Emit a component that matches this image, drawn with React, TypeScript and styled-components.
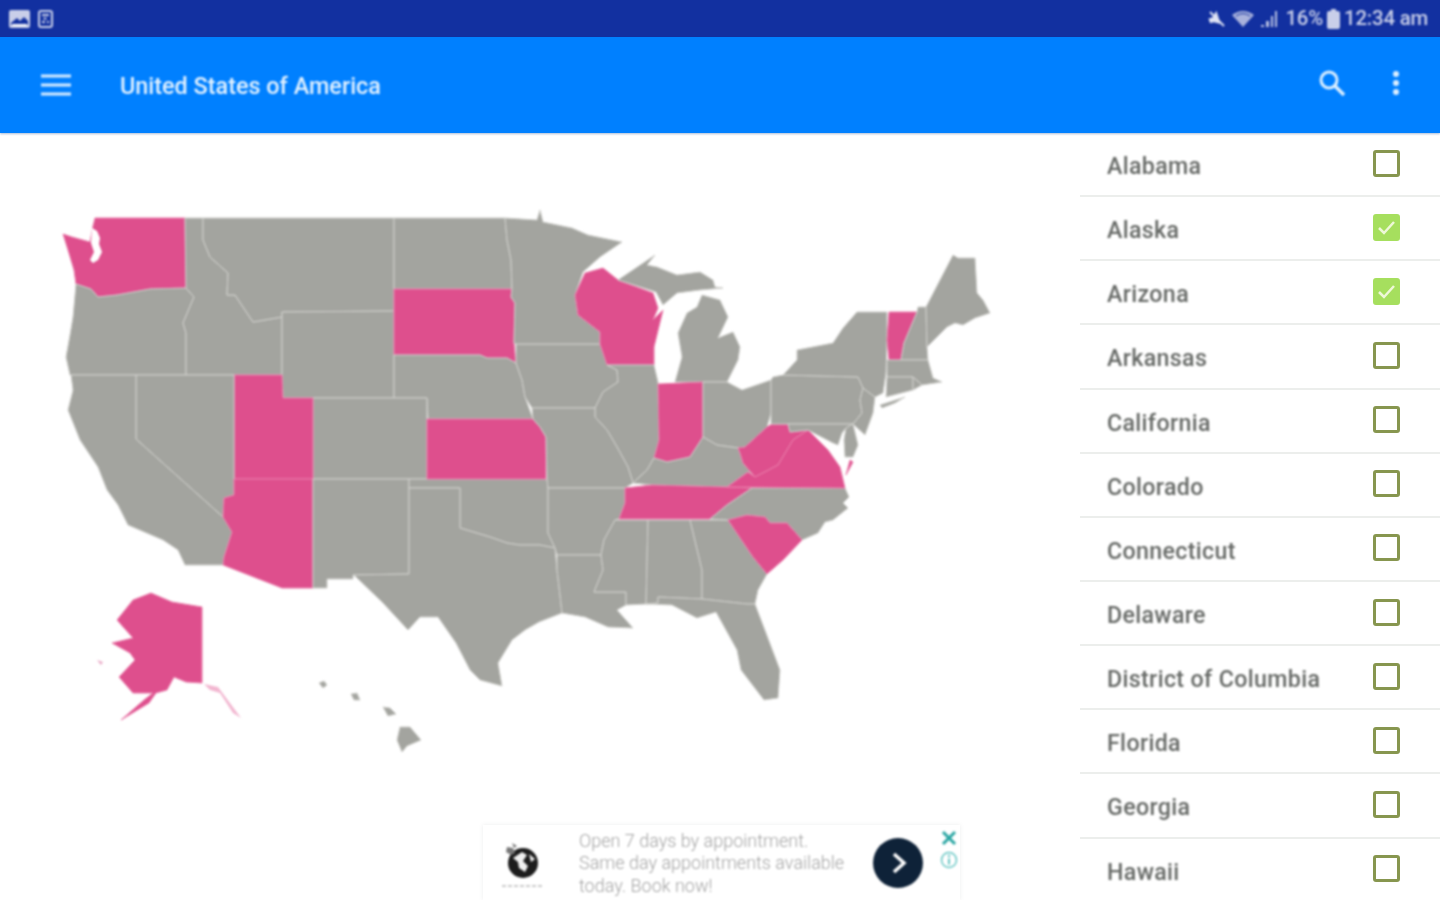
import React from "react";
import styled, { createGlobalStyle, css } from "styled-components";

const Global = createGlobalStyle`
  html, body { margin: 0; padding: 0; background: #fff; }
  body { font-family: Roboto, "Noto Sans", sans-serif; overflow: hidden; }
`;

const soft = css`
  filter: blur(0.9px);
`;

const Page = styled.div`
  width: 1440px;
  height: 900px;
  display: flex;
  flex-direction: column;
  overflow: hidden;
  position: relative;
`;

const StatusBar = styled.div`
  height: 37px;
  flex: none;
  background: #1230a0;
  display: flex;
  align-items: center;
  justify-content: space-between;
  padding: 0 12px 0 9px;
  color: #c9cfe9;
`;
const StatusGroup = styled.div`
  display: flex;
  align-items: center;
  ${soft}
`;
const LeftIcons = styled(StatusGroup)`
  gap: 8px;
`;
const RightIcons = styled(StatusGroup)`
  gap: 4px;
`;
const StatusText = styled.span`
  font-size: 20.4px;
  font-weight: 500;
  letter-spacing: -0.2px;
  line-height: 37px;
`;

const AppBar = styled.header`
  height: 96px;
  flex: none;
  background: #0080ff;
  display: flex;
  align-items: center;
  padding: 0 40px 0 41px;
  box-shadow: 0 1px 2px rgba(0, 60, 140, 0.35);
  position: relative;
  z-index: 2;
  color: #e4f2ff;
`;
const MenuIcon = styled.svg`
  flex: none;
  ${soft}
`;
const Title = styled.h1`
  margin: 2px 0 0 49px;
  font-size: 23.4px;
  font-weight: 500;
  flex: 1;
  ${soft}
`;
const ActionIcons = styled.div`
  display: flex;
  align-items: center;
  gap: 46px;
  margin-top: -5px;
  ${soft}
`;

const Content = styled.main`
  flex: 1;
  display: flex;
  min-height: 0;
  position: relative;
`;
const MapArea = styled.section`
  width: 1080px;
  flex: none;
  position: relative;
`;
const MapSvg = styled.svg`
  display: block;
  ${soft}
`;

const List = styled.ul`
  width: 360px;
  flex: none;
  margin: 0;
  padding: 0;
  list-style: none;
`;
const Row = styled.li`
  height: 64.15px;
  box-sizing: border-box;
  border-bottom: 2px solid #eceeec;
  display: flex;
  align-items: center;
  justify-content: space-between;
  padding: 0 40px 0 27px;
`;
const RowLabel = styled.span`
  font-size: 23.2px;
  font-weight: 500;
  letter-spacing: 0.35px;
  color: #666966;
  transform: translateY(2px);
  ${soft}
`;
const Check = styled.span<{ $on: boolean }>`
  width: 27px;
  height: 27px;
  box-sizing: border-box;
  border-radius: 3px;
  border: 3px solid ${(p) => (p.$on ? "#a6df5e" : "#87964f")};
  background: ${(p) => (p.$on ? "#a6df5e" : "#fff")};
  display: flex;
  align-items: center;
  justify-content: center;
  transform: translateY(-1px);
  filter: blur(0.6px);
`;

const Ad = styled.aside`
  position: absolute;
  left: 483px;
  bottom: 0;
  width: 477px;
  height: 75px;
  background: #fff;
  box-shadow: 0 0 4px rgba(120, 130, 130, 0.14);
  display: flex;
  align-items: center;
`;
const AdLogo = styled.div`
  width: 80px;
  margin-right: 16px;
  margin-top: 6px;
  flex: none;
  display: flex;
  justify-content: center;
  align-items: center;
  ${soft}
`;
const AdText = styled.p`
  margin: 2px 0 0;
  width: 294px;
  flex: none;
  font-size: 18px;
  line-height: 22.5px;
  font-weight: 300;
  color: #a3a3a3;
  white-space: nowrap;
  ${soft}
`;
const AdGo = styled.div`
  width: 50px;
  height: 50px;
  flex: none;
  border-radius: 50%;
  background: #0e2238;
  display: flex;
  align-items: center;
  justify-content: center;
  ${soft}
`;
const AdMarks = styled.div`
  margin-left: 17px;
  display: flex;
  flex-direction: column;
  align-items: center;
  gap: 5px;
  align-self: flex-start;
  padding-top: 5px;
  ${soft}
`;

type Region = { name: string; pts: string };

const selected = new Set([
  "Washington","South Dakota","Wisconsin","Vermont","Utah","Kansas","Indiana",
  "West Virginia","Virginia","Tennessee","South Carolina","Arizona","Alaska","VA Shore",
]);

const regions: Region[] = [
  { name: "Washington", pts: "95,218 185,218 186,288 150,289 117,295 98,297 91,289 76,284 74,270 68,250 63,234 72,237 90,242 93,226" },
  { name: "Oregon", pts: "76,284 91,289 98,297 117,295 150,289 186,288 194,297 183,323 186,333 186,375 70,375 66,357 70,335 73,317" },
  { name: "Idaho", pts: "185,218 203,218 203,240 210,257 228,273 227,295 235,295 253,322 282,317 282,375 186,375 186,333 183,323 194,297 186,288" },
  { name: "Montana", pts: "203,218 394,218 394,311 282,312 282,317 253,322 235,295 227,295 228,273 210,257 203,240" },
  { name: "Wyoming", pts: "282,312 394,311 394,398 283,398 282,375" },
  { name: "North Dakota", pts: "394,218 505,218 507,240 511,260 512,289 394,289" },
  { name: "South Dakota", pts: "394,289 512,289 511,297 515,303 514,343 516,363 507,358 487,358 480,355 394,355" },
  { name: "Nebraska", pts: "394,355 480,355 487,358 507,358 516,363 522,380 525,397 533,419 428,419 427,398 394,398" },
  { name: "Colorado", pts: "313,398 427,398 427,479 313,479" },
  { name: "Utah", pts: "234,375 282,375 283,398 313,398 313,479 234,479" },
  { name: "Nevada", pts: "136,375 234,375 234,495 224,498 223,517 136,439" },
  { name: "California", pts: "71,375 136,375 136,439 223,517 232,532 224,557 223,565 185,565 178,550 163,540 128,525 118,505 107,490 98,467 80,440 68,410 73,390" },
  { name: "Arizona", pts: "224,498 234,495 234,479 313,479 313,588 282,588 223,565 224,557 232,532 223,517" },
  { name: "New Mexico", pts: "313,479 409,479 409,574 353,575 353,579 327,579 327,588 313,588" },
  { name: "Oklahoma", pts: "409,479 547,479 548,488 548,533 555,548 540,545 520,545 507,543 490,537 460,528 460,488 409,488" },
  { name: "Texas", pts: "409,488 460,488 460,528 490,537 507,543 520,545 540,545 555,548 557,570 560,595 562,613 539,622 525,630 512,640 498,663 502,686 480,680 470,670 456,643 438,617 420,617 408,630 383,603 355,576 353,575 409,574" },
  { name: "Kansas", pts: "427,419 533,419 540,427 546,437 546,479 427,479" },
  { name: "Iowa", pts: "516,344 600,344 607,365 617,370 618,382 603,392 595,408 532,408 525,397 522,380 516,363" },
  { name: "Minnesota", pts: "505,218 537,220 540,210 543,222 572,228 588,235 622,242 600,257 583,272 575,295 578,315 600,332 600,344 516,344 514,343 515,303 511,297 512,289 511,260 507,240" },
  { name: "Wisconsin", pts: "585,273 603,268 618,280 653,293 658,308 653,320 663,310 654,347 654,365 607,365 600,344 600,332 578,315 575,295" },
  { name: "Upper Michigan", pts: "618,280 655,255 647,265 657,267 677,275 700,272 713,280 715,287 723,288 700,290 677,293 663,305 656,292" },
  { name: "Lower Michigan", pts: "702,295 720,300 728,317 718,338 733,332 740,347 738,360 727,382 675,382 682,357 678,333 687,313 697,307" },
  { name: "Illinois", pts: "607,365 654,365 658,382 659,440 654,458 647,470 633,483 628,467 617,447 607,430 595,417 595,408 603,392 618,382 617,370" },
  { name: "Indiana", pts: "658,384 703,382 703,437 690,457 667,462 654,458 659,440" },
  { name: "Ohio", pts: "703,382 727,382 742,390 771,380 771,413 767,427 745,447 738,448 717,445 703,437" },
  { name: "Missouri", pts: "532,408 595,408 595,417 607,430 617,447 628,467 633,483 625,488 548,488 547,479 546,437 540,427 533,419" },
  { name: "Arkansas", pts: "548,488 625,488 625,503 619,519 615,520 604,540 601,555 557,555 555,548 548,533" },
  { name: "Louisiana", pts: "557,555 601,555 603,570 594,592 626,592 626,605 617,610 633,628 608,627 585,617 562,613 560,595 557,570" },
  { name: "Mississippi", pts: "615,520 648,520 646,604 626,605 626,592 594,592 603,570 601,555 604,540" },
  { name: "Alabama", pts: "648,520 690,520 702,570 702,599 658,597 658,603 646,604" },
  { name: "Georgia", pts: "690,520 728,520 753,557 767,574 758,590 755,604 747,604 702,599 702,570" },
  { name: "Florida", pts: "646,604 658,603 658,597 702,599 747,604 755,604 766,633 780,670 778,698 764,700 741,670 737,650 716,612 697,618 672,605" },
  { name: "Kentucky", pts: "633,483 647,470 654,458 667,462 690,457 703,437 717,445 738,448 740,453 743,463 753,475 748,472 727,487 652,485" },
  { name: "Tennessee", pts: "625,488 652,485 727,487 752,488 727,505 710,519 619,519 625,503" },
  { name: "North Carolina", pts: "752,488 845,488 849,497 843,503 848,508 838,516 833,520 825,522 818,533 802,540 787,523 770,523 765,517 747,515 728,520 710,519 727,505" },
  { name: "South Carolina", pts: "728,520 747,515 765,517 770,523 787,523 802,540 783,560 767,574 753,557" },
  { name: "West Virginia", pts: "767,427 772,424 788,424 790,432 808,430 793,440 787,450 778,465 755,477 743,463 740,453 738,448 745,447" },
  { name: "Virginia", pts: "808,430 828,450 840,467 845,488 727,487 748,472 755,477 778,465 787,450 793,440" },
  { name: "VA Shore", pts: "850,460 853,462 846,475" },
  { name: "Pennsylvania", pts: "771,380 773,377 783,375 858,377 863,388 860,400 862,413 853,424 771,424 771,413" },
  { name: "Maryland", pts: "788,424 853,424 846,428 842,433 838,445 833,443 808,430 790,432" },
  { name: "Delaware", pts: "846,428 853,424 858,445 853,457 845,457 844,440" },
  { name: "New Jersey", pts: "863,388 875,397 873,413 865,435 853,424 862,413 860,400" },
  { name: "New York", pts: "857,312 887,312 887,340 886,373 883,393 875,397 863,388 858,377 783,375 797,360 797,350 833,343 843,328" },
  { name: "Long Island", pts: "880,405 905,397 895,403 882,408" },
  { name: "Vermont", pts: "889,312 917,312 904,343 901,360 889,360 887,340" },
  { name: "New Hampshire", pts: "917,312 918,307 926,307 927,347 928,360 901,360 904,343" },
  { name: "Maine", pts: "926,307 940,280 953,255 958,258 975,258 977,293 983,300 990,313 975,318 963,325 955,323 947,327 927,347" },
  { name: "Massachusetts", pts: "887,360 928,360 933,378 942,382 922,385 913,377 887,377" },
  { name: "Connecticut", pts: "887,377 913,377 913,390 886,397" },
  { name: "Rhode Island", pts: "913,377 922,385 913,390" },
  { name: "Hawaii", pts: "400,727 410,727 421,740 407,746 402,752 397,740" },
  { name: "Maui", pts: "383,707 390,708 396,714 388,716" },
  { name: "Oahu", pts: "351,694 357,693 360,700 354,700" },
  { name: "Kauai", pts: "319,683 324,681 327,685 323,688" },
  { name: "Alaska", pts: "151,593 172,602 202,607 202,683 186,682 174,677 167,690 156,693 149,703 121,720 144,700 153,693 133,693 119,677 135,660 130,653 112,643 133,638 117,620 133,600" },
];

const states = [
  "Alabama","Alaska","Arizona","Arkansas","California","Colorado",
  "Connecticut","Delaware","District of Columbia","Florida","Georgia","Hawaii",
];
const checked = new Set(["Alaska", "Arizona"]);

export default function App() {
  return (
    <>
      <Global />
      <Page>
        <StatusBar>
          <LeftIcons>
            <svg width="21" height="18" viewBox="0 0 21 18">
              <rect x="0" y="0" width="21" height="18" rx="2" fill="#c9cfe9" />
              <path d="M2 13l6-5 3 3 4-4 4 4v4H2z" fill="#1230a0" />
              <path d="M3 14h15v2H3z" fill="#fff" />
            </svg>
            <svg width="15" height="18" viewBox="0 0 15 18">
              <rect x="1" y="1" width="13" height="16" rx="2" fill="none" stroke="#c9cfe9" strokeWidth="2" />
              <path d="M4 5h7M4 12h3M9 12h2M5.500 8.500l3 0" stroke="#c9cfe9" strokeWidth="2" />
            </svg>
          </LeftIcons>
          <RightIcons>
            <svg width="20" height="20" viewBox="0 0 20 20">
              <path d="M2 7h4l6-5v14l-6-4H2z" fill="#dfe3f4" transform="rotate(-18 10 10)" />
              <path d="M3 3l14 14" stroke="#dfe3f4" strokeWidth="2" />
            </svg>
            <svg width="24" height="18" viewBox="0 0 24 18" style={{ marginLeft: 0 }}>
              <path d="M1 5Q12 -3 23 5L12 17z" fill="#a9b2dc" />
              <path d="M5 6Q12 1 19 6" stroke="#1230a0" strokeWidth="1" fill="none" />
            </svg>
            <svg width="18" height="18" viewBox="0 0 18 18" style={{ marginLeft: 1, marginRight: 3 }}>
              <path d="M1 15h3v2H1zM6 11h3v6H6zM11 6h2v11h-2zM15 1h2v16h-2z" fill="#b8c0e2" />
            </svg>
            <StatusText>16%</StatusText>
            <svg width="13" height="20" viewBox="0 0 13 20">
              <path d="M4 0h5v2h2a2 2 0 0 1 2 2v14a2 2 0 0 1-2 2H2a2 2 0 0 1-2-2V4a2 2 0 0 1 2-2h2z" fill="#c9cfe9" />
            </svg>
            <StatusText>12:34 am</StatusText>
          </RightIcons>
        </StatusBar>

        <AppBar>
          <MenuIcon width="30" height="22" viewBox="0 0 30 22">
            <path d="M0 2h30M0 11h30M0 20h30" stroke="#d8ecff" strokeWidth="3" />
          </MenuIcon>
          <Title>United States of America</Title>
          <ActionIcons>
            <svg width="28" height="28" viewBox="0 0 28 28">
              <circle cx="11" cy="11" r="8" fill="none" stroke="#dcefff" strokeWidth="3" />
              <path d="M17 17l9 9" stroke="#dcefff" strokeWidth="3.500" />
            </svg>
            <svg width="8" height="26" viewBox="0 0 8 26">
              <circle cx="4" cy="4" r="3" fill="#dcefff" />
              <circle cx="4" cy="13" r="3" fill="#dcefff" />
              <circle cx="4" cy="22" r="3" fill="#dcefff" />
            </svg>
          </ActionIcons>
        </AppBar>

        <Content>
          <MapArea>
            <MapSvg width="1080" height="767" viewBox="0 133 1080 767">
              {regions.map((r) => (
                <polygon
                  key={r.name}
                  points={r.pts}
                  fill={selected.has(r.name) ? "#de4f8d" : "#a3a49f"}
                  stroke={selected.has(r.name) ? "#ea7dab" : "#cfcfcb"}
                  strokeWidth="1"
                  strokeLinejoin="round"
                />
              ))}
              <path d="M92 228l5 3 3 7-1 6 3 8-4 8-5 3-3-3 4-8-3-9z" fill="#fff" />
              <path d="M204 684l14 3 23 31-8-5-13-20-10-3z" fill="#f2b6d0" />
              <path d="M97 660l6 2-2 3z" fill="#e9a9c6" />
            </MapSvg>
            <Ad>
              <AdLogo>
                <svg width="46" height="50" viewBox="0 0 46 50">
                  <circle cx="23" cy="22" r="15" fill="#1c1c1c" />
                  <path d="M13 17l9-6 5 3-4 6 5 5-3 6-6-4-1-6zM29 13l6 5-4 3z" fill="#f0f0f0" />
                  <path d="M7 6l6 1 2 5-4 2-5-3zM12 2l5 3-3 2z" fill="#777" />
                  <path d="M2 45h42" stroke="#bbb" strokeWidth="1.500" strokeDasharray="4 2" />
                </svg>
              </AdLogo>
              <AdText>
                Open 7 days by appointment.
                <br />
                Same day appointments available
                <br />
                today. Book now!
              </AdText>
              <AdGo>
                <svg width="22" height="26" viewBox="0 0 22 26">
                  <path d="M7 4l10 9-10 9" fill="none" stroke="#fff" strokeWidth="3.500" />
                </svg>
              </AdGo>
              <AdMarks>
                <svg width="16" height="16" viewBox="0 0 16 16">
                  <path d="M2 2l12 12M14 2L2 14" stroke="#2aa6a3" strokeWidth="3" />
                </svg>
                <svg width="18" height="18" viewBox="0 0 18 18">
                  <circle cx="9" cy="9" r="7.500" fill="none" stroke="#65c6c3" strokeWidth="1.500" />
                  <path d="M9 7.500v6" stroke="#65c6c3" strokeWidth="2" />
                  <circle cx="9" cy="5" r="1.200" fill="#65c6c3" />
                </svg>
              </AdMarks>
            </Ad>
          </MapArea>
          <List>
            {states.map((s) => (
              <Row key={s}>
                <RowLabel>{s}</RowLabel>
                <Check $on={checked.has(s)}>
                  {checked.has(s) && (
                    <svg width="19" height="15" viewBox="0 0 19 15">
                      <path d="M2 8l5 5L17 2" fill="none" stroke="#eef8d8" strokeWidth="2.500" />
                    </svg>
                  )}
                </Check>
              </Row>
            ))}
          </List>
        </Content>
      </Page>
    </>
  );
}
